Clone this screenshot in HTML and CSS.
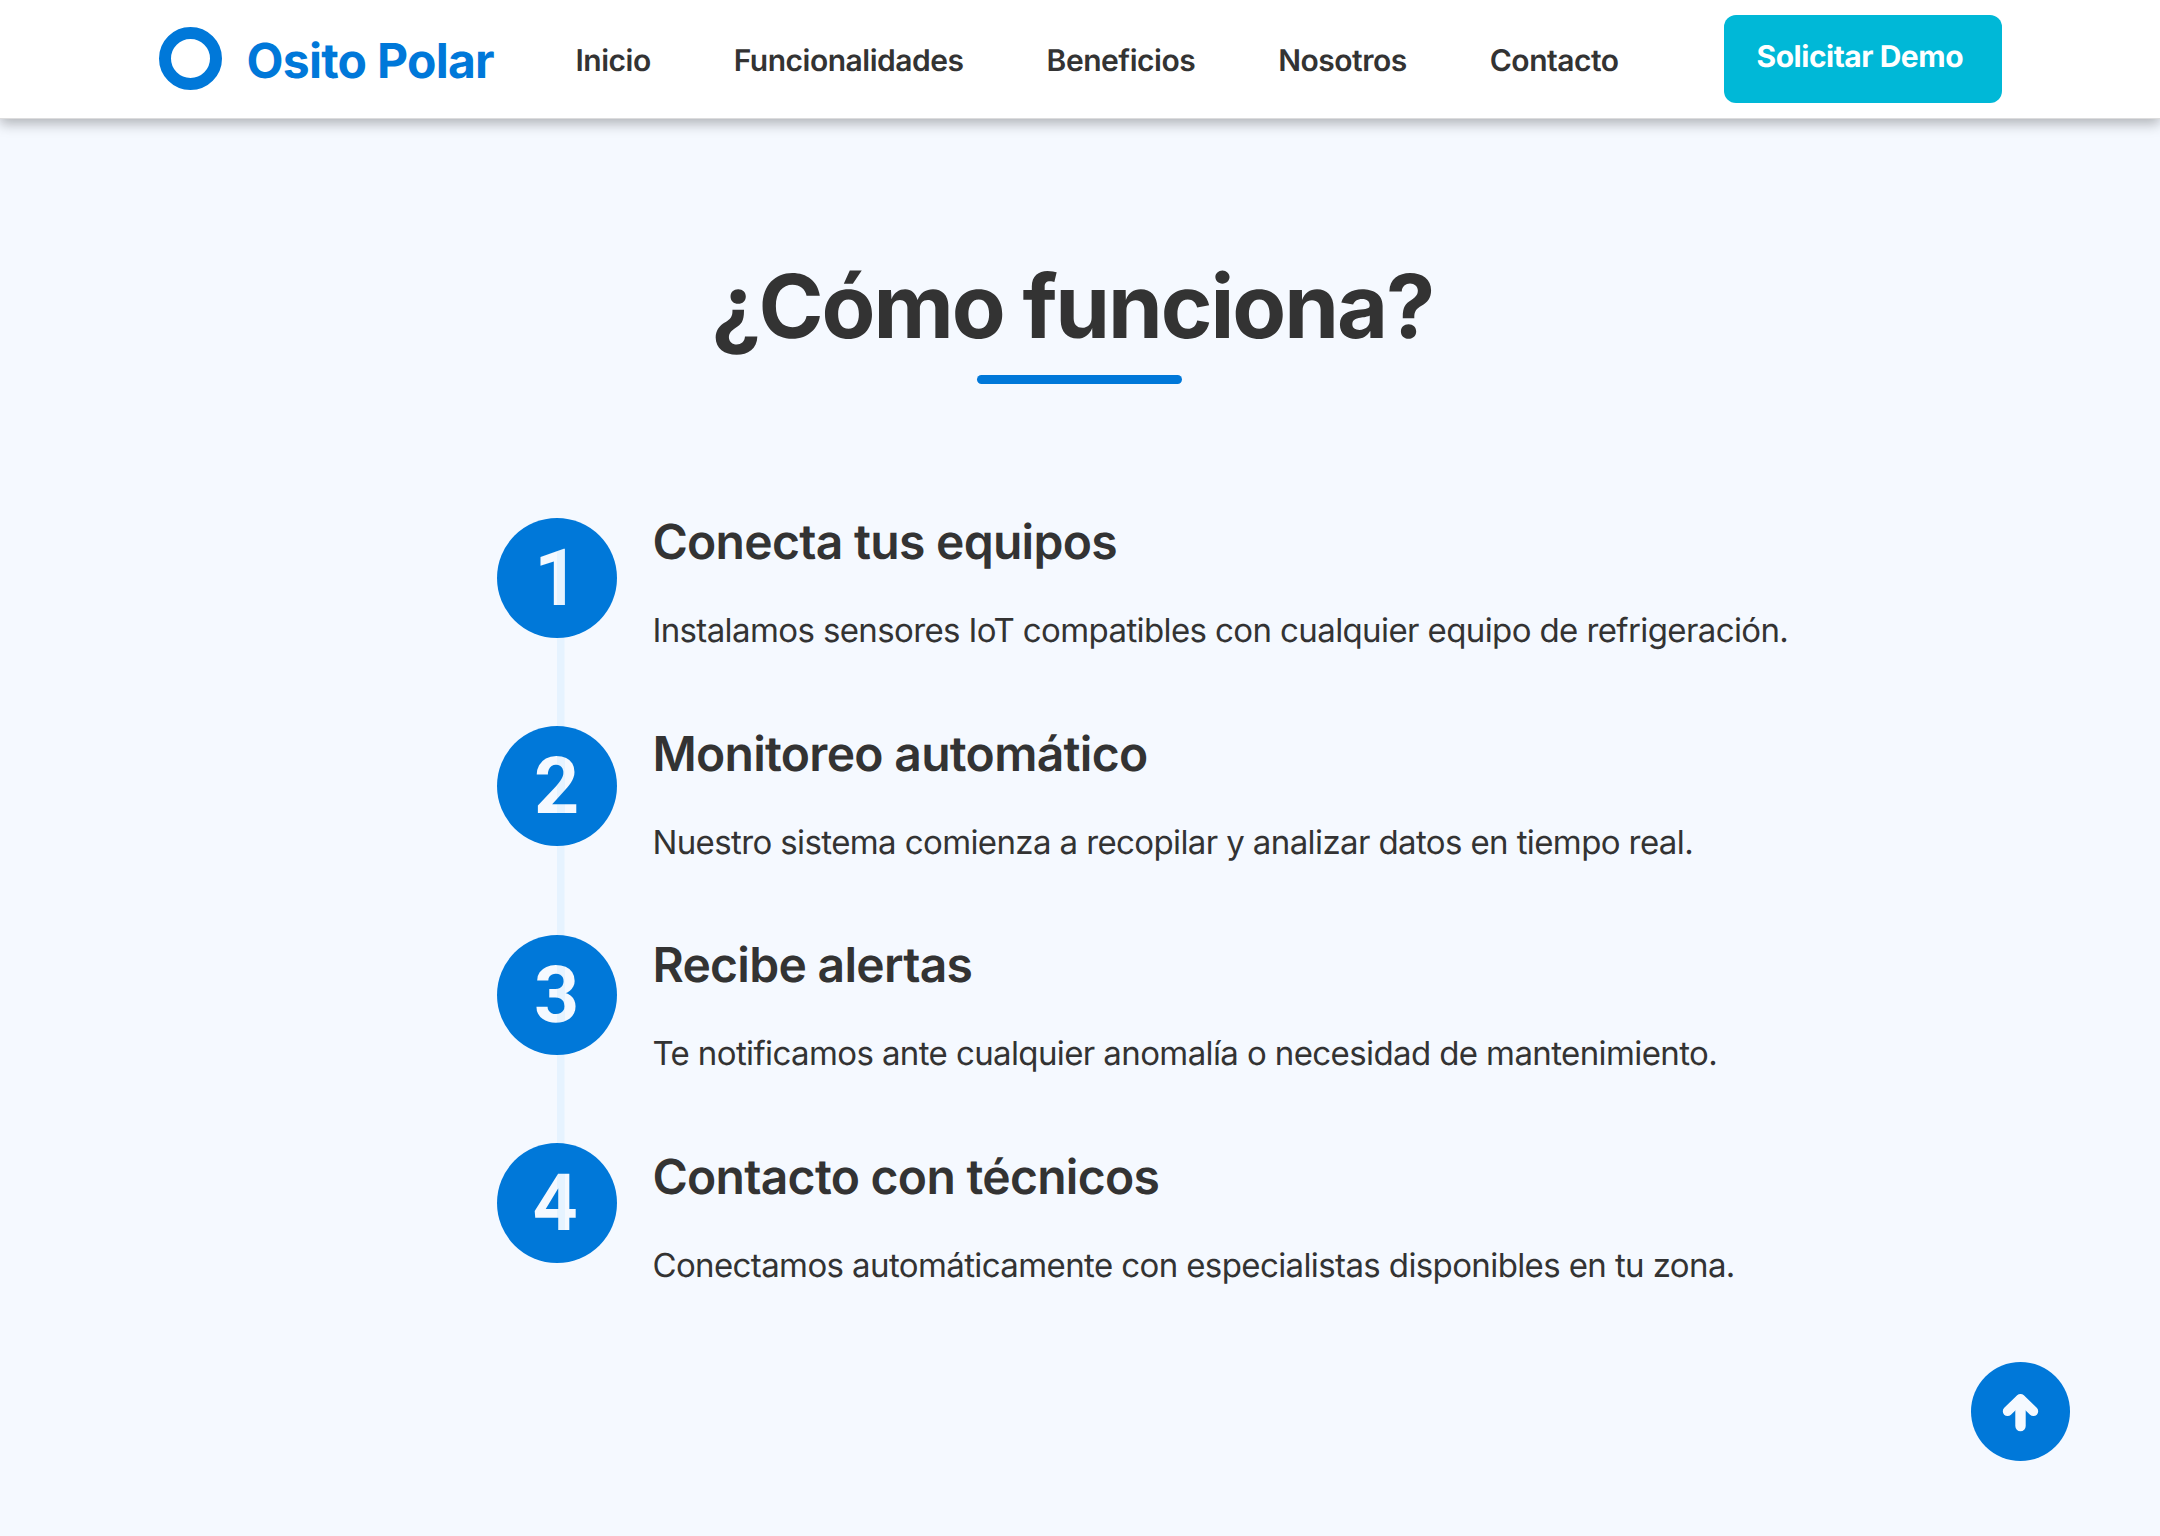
FILE: index.html
```html
<!DOCTYPE html>
<html lang="es">
<head>
<meta charset="utf-8">
<title>Osito Polar</title>
<link rel="stylesheet" href="styles.css">
</head>
<body>
<header class="header">
  <a class="brand"><span class="brand-ring"></span><span class="brand-name">Osito Polar</span></a>
  <nav class="nav">
    <a>Inicio</a>
    <a>Funcionalidades</a>
    <a>Beneficios</a>
    <a>Nosotros</a>
    <a>Contacto</a>
  </nav>
  <a class="demo">Solicitar Demo</a>
</header>
<main class="how">
  <h1 class="title">¿Cómo funciona?</h1>
  <div class="rule"></div>
  <div class="steps">
    <div class="rail">
      <div class="circle"><span class="digit">1</span></div>
      <div class="circle"><span class="digit">2</span></div>
      <div class="circle"><span class="digit">3</span></div>
      <div class="circle"><span class="digit digit-four">4</span></div>
    </div>
    <div class="texts">
      <section>
        <h2>Conecta tus equipos</h2>
        <p>Instalamos sensores IoT compatibles con cualquier equipo de refrigeración.</p>
      </section>
      <section>
        <h2>Monitoreo automático</h2>
        <p>Nuestro sistema comienza a recopilar y analizar datos en tiempo real.</p>
      </section>
      <section>
        <h2>Recibe alertas</h2>
        <p>Te notificamos ante cualquier anomalía o necesidad de mantenimiento.</p>
      </section>
      <section>
        <h2>Contacto con técnicos</h2>
        <p>Conectamos automáticamente con especialistas disponibles en tu zona.</p>
      </section>
    </div>
  </div>
</main>
<a class="to-top" aria-label="Subir">
  <svg width="99" height="99" viewBox="0 0 99 99" fill="none" stroke="#f5f9ff" stroke-linecap="round" stroke-linejoin="round">
    <path d="M49.5 38V64" stroke-width="10.4"/>
    <path d="M36.6 49.3 49.5 36.8 62.4 49.3" stroke-width="9.6"/>
    <path d="M49.5 38 43.5 44.5H55.5Z" fill="#f5f9ff" stroke-width="6"/>
  </svg>
</a>
</body>
</html>
```
FILE: styles.css
```css
* { box-sizing: border-box; }

body {
  margin: 0;
  min-height: 1536px;
  background: #f5f9ff;
  color: #333;
  font-family: Inter, "Liberation Sans", sans-serif;
  text-rendering: geometricPrecision;
}

.header {
  display: flex;
  align-items: center;
  height: 119px;
  padding: 0 158px 0 159px;
  border-bottom: 1px solid #dcdcdd;
  background: #fff;
  box-shadow: 0 5px 12px rgba(0, 0, 0, 0.28);
}

.brand { display: flex; align-items: center; gap: 24.5px; }

.brand-ring {
  width: 63px;
  height: 63px;
  margin-bottom: 2px;
  border: 12px solid #0078d9;
  border-radius: 50%;
}

.brand-name {
  margin-top: 3px;
  color: #0078d9;
  font-size: 48px;
  font-weight: 700;
  letter-spacing: -0.015em;
}

.nav {
  display: flex;
  gap: 83px;
  margin-left: 81.5px;
  padding-top: 3px;
  font-size: 30px;
  font-weight: 600;
  letter-spacing: -0.016em;
}

.demo {
  width: 278.5px;
  height: 88.5px;
  margin-left: auto;
  padding-left: 33px;
  border-radius: 12px;
  background: #00b8d7;
  color: #fff;
  font-size: 30px;
  font-weight: 700;
  line-height: 85px;
  letter-spacing: -0.016em;
}

.how {
  display: flex;
  flex-direction: column;
  align-items: center;
  padding-top: 135px;
}

.title {
  margin: 0 15.5px 0 0;
  font-size: 88px;
  font-weight: 700;
  line-height: 106px;
  letter-spacing: -0.0235em;
}

.rule {
  width: 205.5px;
  height: 9px;
  margin: 15px 0.8px 0 0;
  border-radius: 5px;
  background: #0078d9;
}

.steps {
  display: flex;
  align-self: flex-start;
  gap: 35.8px;
  margin: 129px 0 0 496.6px;
}

.rail {
  display: flex;
  flex-direction: column;
  align-self: flex-start;
  gap: 88.5px;
  width: 120px;
  margin-top: 4.6px;
  background: linear-gradient(#e6f3ff, #e6f3ff) 60.1px 60px / 7.5px calc(100% - 120px) no-repeat;
}

.circle {
  height: 120px;
  border-radius: 50%;
  background: #0078d9;
}

/* Digit fill repeats the rail line so it shows through the numeral */
.digit {
  display: block;
  padding-top: 1px;
  background: linear-gradient(90deg, #f5f9ff 60.1px, #e6f3ff 60.1px 67.6px, #f5f9ff 67.6px);
  -webkit-background-clip: text;
  background-clip: text;
  color: transparent;
  font: 700 79px/120px Roboto, sans-serif;
  text-align: center;
}

.digit-four { padding-right: 3px; }

.texts { display: flex; flex-direction: column; gap: 74.5px; }

.texts h2 {
  margin: 0 0 39px;
  font-size: 48px;
  font-weight: 600;
  line-height: 58px;
  letter-spacing: -0.0145em;
}

.texts p {
  margin: 0;
  font-size: 33px;
  font-weight: 400;
  line-height: 40px;
  letter-spacing: -0.0184em;
}

.to-top {
  position: fixed;
  top: 1362px;
  left: 1971px;
  width: 99px;
  height: 99px;
  border-radius: 50%;
  background: #0078d9;
}
```
